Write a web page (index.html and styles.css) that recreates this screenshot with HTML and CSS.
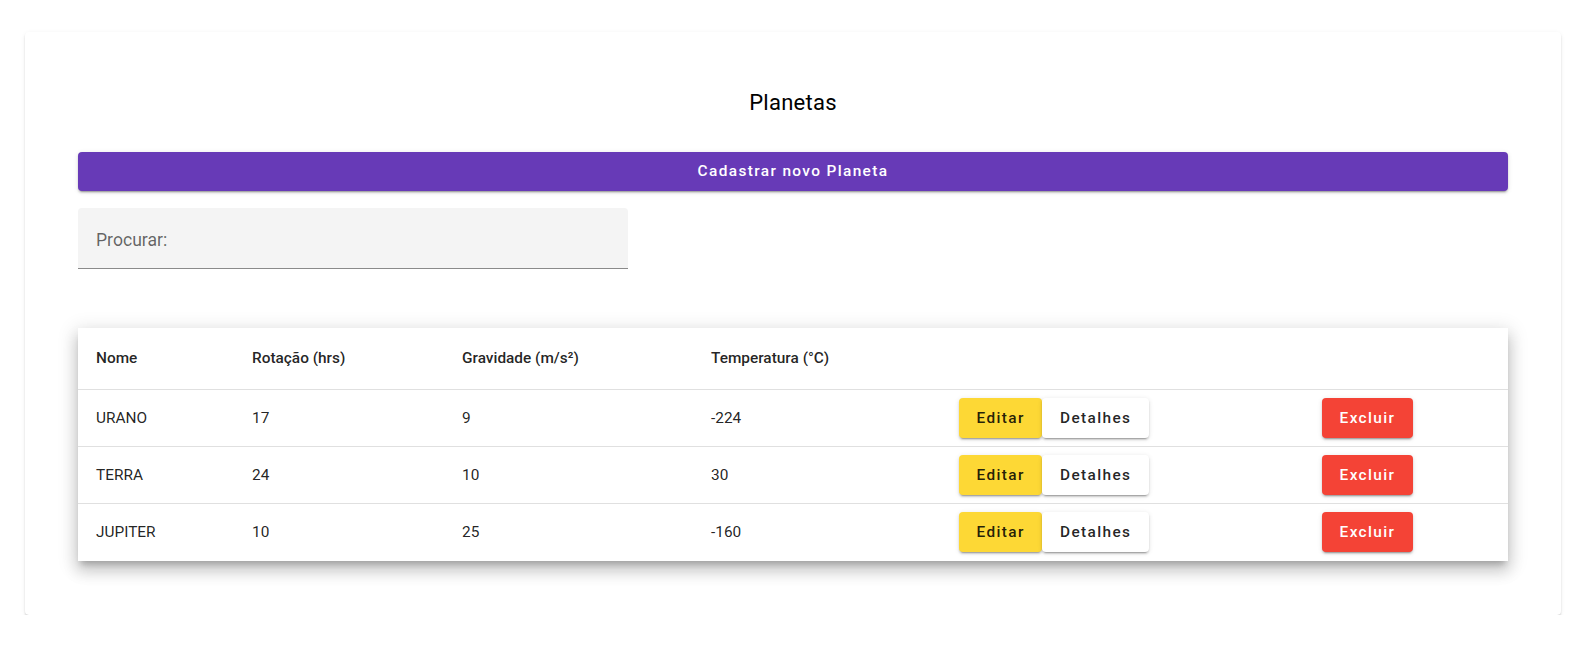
FILE: index.html
```html
<!DOCTYPE html>
<html lang="pt">
<head>
<meta charset="utf-8">
<title>Planetas</title>
<link rel="stylesheet" href="styles.css">
</head>
<body>
<div class="page">
  <div class="card">
    <h1 class="title">Planetas</h1>
    <button class="btn btn-primary btn-block">Cadastrar novo Planeta</button>
    <div class="search">
      <span class="search-label">Procurar:</span>
    </div>
    <div class="table-wrap">
      <table class="table">
        <colgroup>
          <col class="c1"><col class="c2"><col class="c3"><col class="c4"><col class="c5"><col class="c6">
        </colgroup>
        <thead>
          <tr>
            <th>Nome</th>
            <th>Rotação (hrs)</th>
            <th>Gravidade (m/s²)</th>
            <th>Temperatura (°C)</th>
            <th></th>
            <th></th>
          </tr>
        </thead>
        <tbody>
          <tr>
            <td>URANO</td><td>17</td><td>9</td><td>-224</td>
            <td><div class="group"><button class="btn btn-yellow">Editar</button><button class="btn btn-white">Detalhes</button></div></td>
            <td><button class="btn btn-red">Excluir</button></td>
          </tr>
          <tr>
            <td>TERRA</td><td>24</td><td>10</td><td>30</td>
            <td><div class="group"><button class="btn btn-yellow">Editar</button><button class="btn btn-white">Detalhes</button></div></td>
            <td><button class="btn btn-red">Excluir</button></td>
          </tr>
          <tr>
            <td>JUPITER</td><td>10</td><td>25</td><td>-160</td>
            <td><div class="group"><button class="btn btn-yellow">Editar</button><button class="btn btn-white">Detalhes</button></div></td>
            <td><button class="btn btn-red">Excluir</button></td>
          </tr>
        </tbody>
      </table>
    </div>
  </div>
</div>
</body>
</html>
```

FILE: styles.css
```css
* { box-sizing: border-box; }
html, body { margin: 0; padding: 0; background: #ffffff; }
body {
  font-family: Roboto, "Liberation Sans", Arial, sans-serif;
  color: rgba(0, 0, 0, 0.87);
}
.page {
  padding: 32px 26px 0 25px;
}
.card {
  background: #fff;
  border-radius: 4px;
  padding: 55px 53px 54px 53px;
  box-shadow: 0 3px 1px -2px rgba(0,0,0,0.2), 0 2px 2px 0 rgba(0,0,0,0.14), 0 1px 5px 0 rgba(0,0,0,0.06);
}
.title {
  margin: 0 0 32.5px 0;
  font-size: 22px;
  line-height: 32px;
  font-weight: 400;
  letter-spacing: 0.0125em;
  text-align: center;
  color: #000;
}
.btn {
  font-family: Roboto, "Liberation Sans", Arial, sans-serif;
  font-size: 15.4px;
  font-weight: 500;
  letter-spacing: 1.37px;
  border: none;
  border-radius: 4px;
  height: 40px;
  padding: 0 17.6px;
  cursor: pointer;
  box-shadow: 0 3px 1px -2px rgba(0,0,0,0.2), 0 2px 2px 0 rgba(0,0,0,0.14), 0 1px 5px 0 rgba(0,0,0,0.12);
}
.btn-block {
  display: block;
  width: 100%;
  height: 39px;
}
.btn-primary {
  background: #673ab7;
  color: #fff;
}
.search {
  margin-top: 17px;
  width: 550px;
  height: 61px;
  background: #f4f4f4;
  border-radius: 4px 4px 0 0;
  border-bottom: 1px solid #8a8a8a;
  display: flex;
  align-items: center;
  padding: 0 18px;
}
.search-label {
  font-size: 17.6px;
  color: rgba(0,0,0,0.6);
  padding-top: 4px;
}
.table-wrap {
  margin-top: 59px;
  background: #fff;
  box-shadow: 0 6px 6px -3px rgba(0,0,0,0.2), 0 10px 14px 1px rgba(0,0,0,0.14), 0 4px 18px 3px rgba(0,0,0,0.12);
}
.table {
  width: 100%;
  border-collapse: collapse;
  table-layout: fixed;
  font-size: 15.4px;
}
.c1 { width: 156px; }
.c2 { width: 210px; }
.c3 { width: 249px; }
.c4 { width: 248px; }
.c5 { width: 363px; }
.c6 { width: auto; }
.table th {
  height: 62px;
  text-align: left;
  font-weight: 500;
  padding: 0 18px;
  border-bottom: 1px solid #e0e0e0;
  color: rgba(0,0,0,0.87);
}
.table td {
  height: 57px;
  padding: 0 18px;
  border-bottom: 1px solid #e0e0e0;
  color: rgba(0,0,0,0.87);
}
.table tbody tr:last-child td { border-bottom: none; }
.group { display: flex; }
.btn-yellow { background: #fdd835; color: rgba(0,0,0,0.87); }
.btn-white { background: #fff; color: rgba(0,0,0,0.87); }
.btn-red { background: #f44336; color: #fff; }
```
